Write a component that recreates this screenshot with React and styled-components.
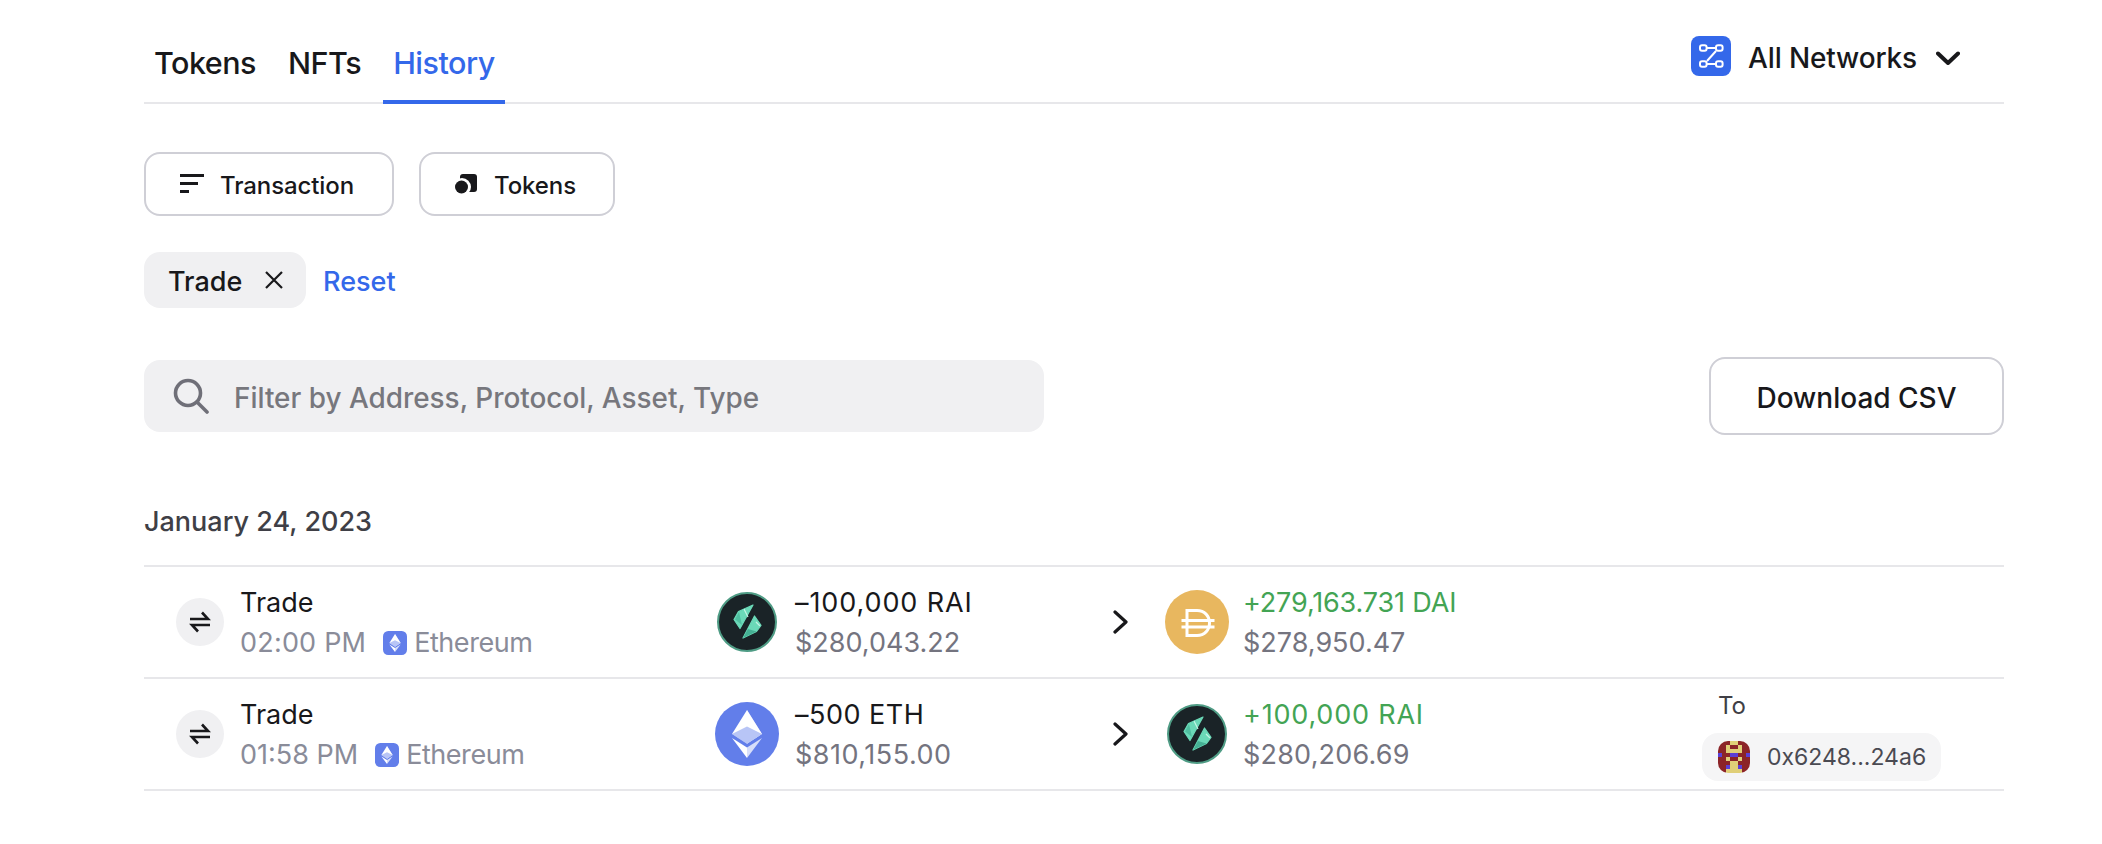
import React from "react";
import styled, { createGlobalStyle } from "styled-components";

const Global = createGlobalStyle`
  html, body { margin: 0; padding: 0; background: #fff; }
  body { font-family: Inter, "Noto Sans", "Liberation Sans", sans-serif; color: #18181b; -webkit-font-smoothing: antialiased; }
  * { box-sizing: border-box; }
`;

const Page = styled.main`
  width: 1860px;
  margin-left: 144px;
`;
const TabBar = styled.nav`
  height: 104px;
  display: flex;
  align-items: flex-end;
  justify-content: space-between;
  border-bottom: 2px solid #e7e7ea;
`;
const Tabs = styled.div`
  display: flex;
  gap: 12px;
  margin-bottom: -2px;
`;
const Tab = styled.div`
  height: 62px;
  padding: 0 10px;
  font-size: 30.500px;
  font-weight: 500;
  letter-spacing: -0.5px;
  line-height: 42px;
  color: ${(p) => (p.$active ? "#3468ea" : "#18181b")};
  border-bottom: 4px solid ${(p) => (p.$active ? "#3468ea" : "transparent")};
`;
const NetworkPicker = styled.div`
  display: flex;
  align-items: center;
  margin: 0 44px 26px 0;
  font-size: 28px;
  font-weight: 500;
  letter-spacing: -0.15px;
  height: 40px;
`;
const NetworkBadge = styled.svg`
  width: 40px;
  height: 40px;
  margin-right: 17px;
`;
const NetworkLabel = styled.span`
  padding-top: 3px;
`;
const Caret = styled.svg`
  width: 24px;
  height: 14px;
  margin: 4px 0 0 19px;
`;
const FilterRow = styled.div`
  display: flex;
  gap: 25px;
  margin-top: 48px;
`;
const FilterButton = styled.div`
  width: ${(p) => p.$w}px;
  height: 64px;
  display: flex;
  align-items: center;
  padding-left: 34px;
  gap: ${(p) => p.$gap}px;
  border: 2px solid #cfcfd6;
  border-radius: 16px;
  font-size: 24px;
  font-weight: 500;
  letter-spacing: -0.1px;
`;
const ButtonLabel = styled.span`
  padding-top: 2px;
`;
const ChipRow = styled.div`
  display: flex;
  align-items: center;
  gap: 17px;
  margin-top: 36px;
`;
const Chip = styled.div`
  width: 162px;
  height: 56px;
  display: flex;
  align-items: center;
  padding-left: 24px;
  gap: 23px;
  background: #f0f0f2;
  border-radius: 16px;
  font-size: 27px;
  font-weight: 500;
`;
const ChipLabel = styled.span`
  padding-top: 3px;
`;
const ResetLink = styled.a`
  color: #3468ea;
  font-size: 27px;
  font-weight: 500;
  padding-top: 3px;
`;
const SearchRow = styled.div`
  display: flex;
  align-items: center;
  justify-content: space-between;
  margin-top: 49px;
`;
const SearchBox = styled.div`
  width: 900px;
  height: 72px;
  display: flex;
  align-items: center;
  gap: 25px;
  padding-left: 29px;
  background: #f0f0f2;
  border-radius: 16px;
  font-size: 27.900px;
  font-weight: 500;
  color: #77777d;
`;
const SearchLabel = styled.span`
  padding-top: 3px;
`;
const DownloadButton = styled.div`
  width: 295px;
  height: 78px;
  display: flex;
  align-items: center;
  justify-content: center;
  padding-top: 3px;
  border: 2px solid #cfcfd6;
  border-radius: 16px;
  font-size: 28px;
  font-weight: 500;
`;
const DateHeading = styled.h2`
  margin: 68px 0 0;
  height: 62px;
  font-size: 27px;
  font-weight: 500;
  line-height: 38px;
  color: #3f3f46;
`;
const Row = styled.div`
  height: 112px;
  display: grid;
  grid-template-columns: 571px 400px 50px 537px 1fr;
  align-items: center;
  border-top: 2px solid #e7e7ea;
  &:last-child {
    height: 114px;
    border-bottom: 2px solid #e7e7ea;
  }
`;
const TypeCell = styled.div`
  display: flex;
  align-items: center;
  gap: 16px;
  padding-left: 32px;
`;
const TypeIcon = styled.div`
  width: 48px;
  height: 48px;
  border-radius: 50%;
  background: #f0f0f2;
  display: flex;
  align-items: center;
  justify-content: center;
`;
const Stack = styled.div`
  display: flex;
  flex-direction: column;
  padding-top: 1px;
`;
const PrimaryText = styled.div`
  font-size: 27px;
  line-height: 40px;
  letter-spacing: ${(p) => p.$track || 0}px;
  color: ${(p) => (p.$gain ? "#43a454" : "#18181b")};
`;
const SecondaryText = styled.div`
  font-size: 27px;
  line-height: 40px;
  letter-spacing: ${(p) => p.$track || 0}px;
  color: ${(p) => p.$c || "#74747f"};
  display: flex;
  align-items: center;
`;
const ChainIcon = styled.svg`
  width: 24px;
  height: 24px;
  margin: 0 7px 0 17px;
`;
const ChainName = styled.span`
  letter-spacing: -0.45px;
`;
const TokenCell = styled.div`
  display: flex;
  align-items: center;
  gap: ${(p) => p.$gap}px;
`;
const TokenFrame = styled.svg`
  width: 64px;
  height: 64px;
  flex: none;
`;
const ArrowCell = styled.div`
  display: flex;
  align-items: center;
  margin-left: -2px;
`;
const ToCell = styled.div`
  display: flex;
  flex-direction: column;
  align-items: flex-start;
  margin-top: 2px;
`;
const ToLabel = styled.div`
  font-size: 24px;
  line-height: 34px;
  color: #3f3f46;
  margin: 0 0 10px 16px;
`;
const AddressPill = styled.div`
  width: 239px;
  height: 48px;
  display: flex;
  align-items: center;
  gap: 17px;
  padding-left: 16px;
  background: #f5f5f6;
  border-radius: 16px;
  font-size: 23px;
  color: #4a4a52;
`;
const Avatar = styled.svg`
  width: 32px;
  height: 32px;
  border-radius: 10px;
`;

const TabsIcon = () => (
  <svg width="24" height="20" viewBox="0 0 24 20" fill="#18181b">
    <rect x="0" y="0" width="24" height="3" />
    <rect x="0" y="8" width="18" height="3" />
    <rect x="0" y="16" width="9" height="3" />
  </svg>
);
const CoinsIcon = () => (
  <svg width="22" height="20" viewBox="0 0 22 20" fill="#18181b">
    <rect x="5" y="0" width="17" height="18" rx="3" />
    <circle cx="7" cy="13" r="9" fill="#fff" />
    <circle cx="6.500" cy="13" r="6.500" />
  </svg>
);
const EthMark = () => (
  <>
    <path d="M32 8 17 32l15 9.700L47 32z" fill="#fff" />
    <path d="M32 8v33.700L47 32z" fill="#fff" opacity=".55" />
    <path d="M32 24.500 17 32l15 9.700L47 32z" fill="#627eea" opacity=".45" />
    <path d="M17 36l15 20V45.600z" fill="#fff" />
    <path d="M47 36 32 56V45.600z" fill="#fff" opacity=".75" />
  </>
);
const EthToken = () => (
  <TokenFrame viewBox="0 0 64 64">
    <circle cx="32" cy="32" r="32" fill="#627eea" />
    <EthMark />
  </TokenFrame>
);
const RaiToken = () => (
  <TokenFrame viewBox="0 0 64 64">
    <circle cx="32" cy="32" r="29" fill="#1a2327" stroke="#4f9c85" strokeWidth="2" />
    <g fill="#6bd9b8" stroke="#6bd9b8" strokeWidth="1.200" strokeLinejoin="round">
      <path d="M38 15 23.500 21.500 19 29.500 25 38.500z" />
      <path d="M39.500 26 46 35.300 41.500 41.500 28 48z" />
    </g>
    <path d="M27 35 20 29.500l4-7.500z" fill="#4fbfa0" />
    <path d="M41.500 41.500 28 48l5-9z" fill="#45b094" />
    <path d="M29 19l4 8M41 32l4 4" stroke="#c3f5e4" strokeWidth="1.200" fill="none" />
  </TokenFrame>
);
const DaiToken = () => (
  <TokenFrame viewBox="0 0 64 64">
    <circle cx="32" cy="32" r="32" fill="#e8b75f" />
    <path d="M22 20.500h10c7.500 0 12.500 5.500 12.500 12.500s-5 12.500-12.500 12.500H22z" fill="none" stroke="#fff" strokeWidth="3" />
    <path d="M16.500 30.500h33M16.500 37h33" stroke="#fff" strokeWidth="3" />
  </TokenFrame>
);
const SwapGlyph = () => (
  <svg width="22" height="22" viewBox="0 0 22 22" fill="none" stroke="#18181b" strokeWidth="2.600">
    <path d="M1 8h18L13 1.500" />
    <path d="M21 14H3l6 6.500" />
  </svg>
);
const Chevron = () => (
  <svg width="16" height="24" viewBox="0 0 16 24" fill="none" stroke="#18181b" strokeWidth="3.200" strokeLinecap="round" strokeLinejoin="round">
    <path d="M2 2l11 10L2 22" />
  </svg>
);

const pixelRows = [
  "RRRYYRRR",
  "RRYRRYRR",
  "RRYYYYRR",
  "BRRBBRRB",
  "RRYRRYRR",
  "RRRYYRRR",
  "RRBYYBRR",
  "RRYYYYRR",
];
const pixelColors = { R: "#8c2428", Y: "#e0cf78", B: "#5b3fd6" };
const PixelAvatar = () => (
  <Avatar viewBox="0 0 8 8" shapeRendering="crispEdges">
    {pixelRows.flatMap((row, y) =>
      row.split("").map((c, x) => <rect key={`${x}-${y}`} x={x} y={y} width="1" height="1" fill={pixelColors[c]} />)
    )}
  </Avatar>
);

const rows = [
  {
    time: "02:00 PM",
    timeTrack: 0.2,
    out: "–100,000 RAI",
    outTrack: 0.9,
    outUsd: "$280,043.22",
    outUsdTrack: 0,
    OutIcon: RaiToken,
    inn: "+279,163.731 DAI",
    innTrack: -0.15,
    inUsd: "$278,950.47",
    inUsdTrack: 0,
    InIcon: DaiToken,
  },
  {
    time: "01:58 PM",
    timeTrack: 0,
    out: "–500 ETH",
    outTrack: 0.5,
    outUsd: "$810,155.00",
    outUsdTrack: 0.5,
    OutIcon: EthToken,
    inn: "+100,000 RAI",
    innTrack: 0.8,
    inUsd: "$280,206.69",
    inUsdTrack: 0.2,
    InIcon: RaiToken,
    to: "0x6248...24a6",
  },
];

export default function App() {
  return (
    <Page>
      <Global />
      <TabBar>
        <Tabs>
          <Tab>Tokens</Tab>
          <Tab>NFTs</Tab>
          <Tab $active>History</Tab>
        </Tabs>
        <NetworkPicker>
          <NetworkBadge viewBox="0 0 40 40">
            <rect width="40" height="40" rx="8" fill="#3468ea" />
            <g fill="none" stroke="#fff" strokeWidth="2">
              <rect x="9" y="9.300" width="6.600" height="5.400" rx="2" />
              <rect x="25" y="9.300" width="6.600" height="5.400" rx="2" />
              <rect x="9" y="25.300" width="6.600" height="5.400" rx="2" />
              <rect x="25" y="25.300" width="6.600" height="5.400" rx="2" />
              <path d="M16 12h9M16 25l9-10M16 28h9" />
            </g>
          </NetworkBadge>
          <NetworkLabel>All Networks</NetworkLabel>
          <Caret viewBox="0 0 24 14" fill="none" stroke="#18181b" strokeWidth="4" strokeLinecap="round" strokeLinejoin="round">
            <path d="M2 2.500l10 9.500 10-9.500" />
          </Caret>
        </NetworkPicker>
      </TabBar>

      <FilterRow>
        <FilterButton $w={250} $gap={16}>
          <TabsIcon />
          <ButtonLabel>Transaction</ButtonLabel>
        </FilterButton>
        <FilterButton $w={196} $gap={17}>
          <CoinsIcon />
          <ButtonLabel>Tokens</ButtonLabel>
        </FilterButton>
      </FilterRow>

      <ChipRow>
        <Chip>
          <ChipLabel>Trade</ChipLabel>
          <svg width="18" height="18" viewBox="0 0 18 18" stroke="#18181b" strokeWidth="2.200" fill="none">
            <path d="M1 1l16 16M17 1 1 17" />
          </svg>
        </Chip>
        <ResetLink>Reset</ResetLink>
      </ChipRow>

      <SearchRow>
        <SearchBox>
          <svg width="36" height="36" viewBox="0 0 36 36" fill="none" stroke="#6f6f78" strokeWidth="3.600" strokeLinecap="round">
            <circle cx="15" cy="15" r="12.500" />
            <path d="M24 24l10 10" />
          </svg>
          <SearchLabel>Filter by Address, Protocol, Asset, Type</SearchLabel>
        </SearchBox>
        <DownloadButton>Download CSV</DownloadButton>
      </SearchRow>

      <DateHeading>January 24, 2023</DateHeading>

      {rows.map((r) => (
        <Row key={r.time}>
          <TypeCell>
            <TypeIcon>
              <SwapGlyph />
            </TypeIcon>
            <Stack>
              <PrimaryText>Trade</PrimaryText>
              <SecondaryText $c="#8a8c99" $track={r.timeTrack}>
                {r.time}
                <ChainIcon viewBox="0 0 64 64">
                  <rect width="64" height="64" rx="14" fill="#627eea" />
                  <EthMark />
                </ChainIcon>
                <ChainName>Ethereum</ChainName>
              </SecondaryText>
            </Stack>
          </TypeCell>
          <TokenCell $gap={16}>
            <r.OutIcon />
            <Stack>
              <PrimaryText $track={r.outTrack}>{r.out}</PrimaryText>
              <SecondaryText $track={r.outUsdTrack}>{r.outUsd}</SecondaryText>
            </Stack>
          </TokenCell>
          <ArrowCell>
            <Chevron />
          </ArrowCell>
          <TokenCell $gap={14}>
            <r.InIcon />
            <Stack>
              <PrimaryText $gain $track={r.innTrack}>{r.inn}</PrimaryText>
              <SecondaryText $track={r.inUsdTrack}>{r.inUsd}</SecondaryText>
            </Stack>
          </TokenCell>
          {r.to && (
            <ToCell>
              <ToLabel>To</ToLabel>
              <AddressPill>
                <PixelAvatar />
                {r.to}
              </AddressPill>
            </ToCell>
          )}
        </Row>
      ))}
    </Page>
  );
}
